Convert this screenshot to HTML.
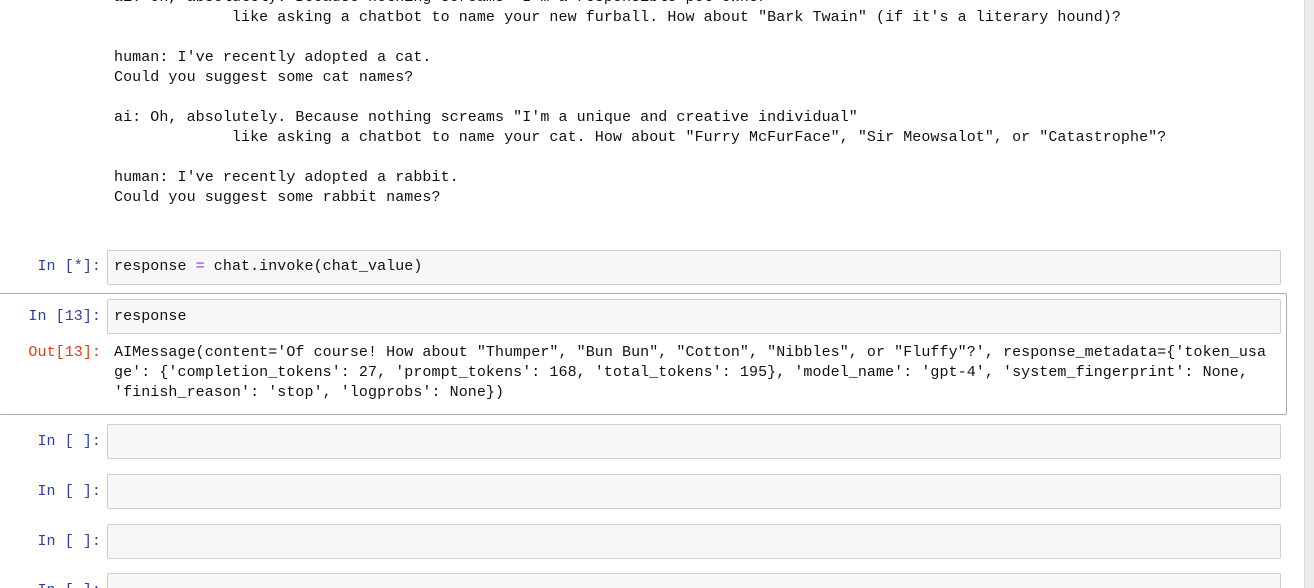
<!DOCTYPE html>
<html style="overflow:hidden"><head><meta charset="utf-8"><style>
body{margin:0;width:1314px;height:588px;overflow:hidden;background:#fff;position:relative;font-family:"Liberation Mono",monospace;font-size:15px;color:#111;letter-spacing:0.07px}
.t{position:absolute;white-space:pre;line-height:20px}
.p{position:absolute;white-space:pre;line-height:20px;text-align:right;width:101px;left:0;color:#303f9f}
.o{color:#d84315}
.box{position:absolute;left:107px;width:1172px;background:#f7f7f7;border:1px solid #cfcfcf;border-radius:2px;height:33px}
.sel{position:absolute;left:-1px;top:293px;width:1286px;height:120px;border:1px solid #ababab;border-radius:2px}
.bar{position:absolute;right:0;top:0;width:9px;height:588px;background:#ececec;border-left:1px solid #ddd}
</style></head><body>
<div class="t" style="left:114px;top:-12px">ai: Oh, absolutely. Because nothing screams "I'm a responsible pet owner"</div>
<div class="t" style="left:114px;top:8px">             like asking a chatbot to name your new furball. How about "Bark Twain" (if it's a literary hound)?</div>
<div class="t" style="left:114px;top:48px">human: I've recently adopted a cat.
Could you suggest some cat names?</div>
<div class="t" style="left:114px;top:108px">ai: Oh, absolutely. Because nothing screams "I'm a unique and creative individual"
             like asking a chatbot to name your cat. How about "Furry McFurFace", "Sir Meowsalot", or "Catastrophe"?</div>
<div class="t" style="left:114px;top:168px">human: I've recently adopted a rabbit.
Could you suggest some rabbit names?</div>

<div class="box" style="top:250px"></div>
<div class="p" style="top:257px">In [*]:</div>
<div class="t" style="left:114px;top:257px">response <span style="color:#aa22ff">=</span> chat.invoke(chat_value)</div>

<div class="sel"></div>
<div class="box" style="top:299px"></div>
<div class="p" style="top:307px">In [13]:</div>
<div class="t" style="left:114px;top:307px">response</div>
<div class="p o" style="top:343px">Out[13]:</div>
<div class="t" style="left:114px;top:343px">AIMessage(content='Of course! How about "Thumper", "Bun Bun", "Cotton", "Nibbles", or "Fluffy"?', response_metadata={'token_usa
ge': {'completion_tokens': 27, 'prompt_tokens': 168, 'total_tokens': 195}, 'model_name': 'gpt-4', 'system_fingerprint': None,
'finish_reason': 'stop', 'logprobs': None})</div>

<div class="box" style="top:424px"></div>
<div class="p" style="top:432px">In [ ]:</div>
<div class="box" style="top:474px"></div>
<div class="p" style="top:482px">In [ ]:</div>
<div class="box" style="top:524px"></div>
<div class="p" style="top:532px">In [ ]:</div>
<div class="box" style="top:573px"></div>
<div class="p" style="top:581px">In [ ]:</div>
<div class="bar"></div>
</body></html>
